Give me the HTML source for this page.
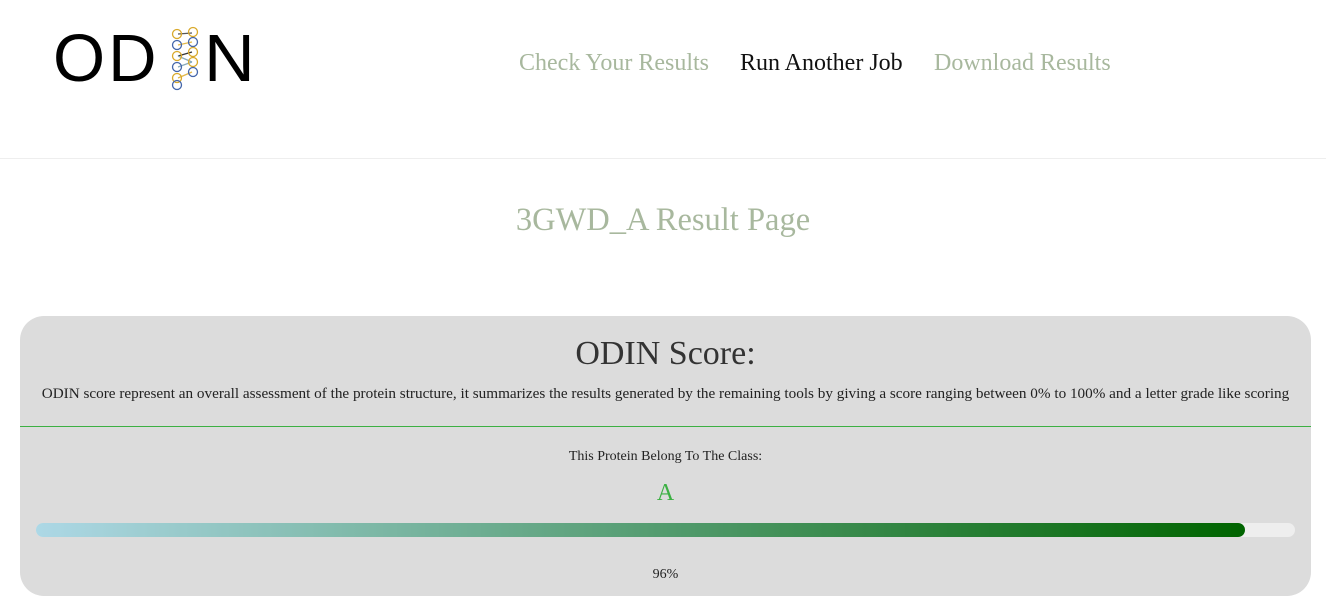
<!DOCTYPE html>
<html><head><meta charset="utf-8"><style>
body{margin:0;width:1326px;height:615px;background:#fff;font-family:"Liberation Serif",serif;overflow:hidden;position:relative}
.abs{position:absolute;white-space:nowrap}
.logo{font-family:"Liberation Sans",sans-serif;font-size:67px;color:#000;top:19px;line-height:80px}
.nav{top:48px;font-size:24px;line-height:30px}
.hr{position:absolute;left:0;top:158px;width:1326px;height:1px;background:#eee}
.card{position:absolute;left:20px;top:316px;width:1291px;height:280px;background:#dcdcdc;border-radius:24px;overflow:hidden}
</style></head><body>
<div class="abs logo" style="left:53px;letter-spacing:3px">OD</div>
<div class="abs logo" style="left:204px;transform:scaleX(1.05);transform-origin:left">N</div>
<svg class="abs" style="left:168px;top:26px" width="34" height="66" viewBox="0 0 34 66">
<g fill="none" stroke-width="1.3">
<line x1="10" y1="8" x2="24" y2="7" stroke="#555"/><line x1="10" y1="19" x2="24" y2="16" stroke="#e3b94a"/>
<line x1="10" y1="30" x2="24" y2="26" stroke="#333"/><line x1="10" y1="41" x2="24" y2="36" stroke="#8ab"/>
<line x1="10" y1="52" x2="24" y2="46" stroke="#e3b94a"/><line x1="10" y1="30" x2="24" y2="36" stroke="#8ab"/>
<circle cx="9" cy="8" r="4.5" stroke="#d9a92b"/><circle cx="9" cy="19" r="4.5" stroke="#4466aa"/>
<circle cx="9" cy="30" r="4.5" stroke="#d9a92b"/><circle cx="9" cy="41" r="4.5" stroke="#4466aa"/>
<circle cx="9" cy="52" r="4.5" stroke="#d9a92b"/><circle cx="9" cy="59" r="4.5" stroke="#4466aa"/>
<circle cx="25" cy="6" r="4.5" stroke="#d9a92b"/><circle cx="25" cy="16" r="4.5" stroke="#4466aa"/>
<circle cx="25" cy="26" r="4.5" stroke="#d9a92b"/><circle cx="25" cy="36" r="4.5" stroke="#d9a92b"/>
<circle cx="25" cy="46" r="4.5" stroke="#4466aa"/>
</g></svg>
<div class="abs nav" style="left:519px;color:#a8b89e">Check Your Results</div>
<div class="abs nav" style="left:740px;color:#111">Run Another Job</div>
<div class="abs nav" style="left:934px;color:#a8b89e">Download Results</div>
<div class="hr"></div>
<div class="abs" style="left:0;width:1326px;text-align:center;top:202px;font-size:32.5px;color:#a8b89e">3GWD_A Result Page</div>
<div class="card">
<div class="abs" style="left:0;width:1291px;text-align:center;top:19px;font-size:34px;color:#333">ODIN Score:</div>
<div class="abs" style="left:0;width:1291px;text-align:center;top:69px;font-size:15.2px;color:#222">ODIN score represent an overall assessment of the protein structure, it summarizes the results generated by the remaining tools by giving a score ranging between 0% to 100% and a letter grade like scoring</div>
<div style="position:absolute;left:0;top:110px;width:1291px;height:1px;background:#3cb043"></div>
<div class="abs" style="left:0;width:1291px;text-align:center;top:133px;font-size:14px;color:#222">This Protein Belong To The Class:</div>
<div class="abs" style="left:0;width:1291px;text-align:center;top:164px;font-size:24px;color:#3cb043">A</div>
<div style="position:absolute;left:16px;top:207px;width:1259px;height:14px;border-radius:7px;background:#eee">
<div style="width:1209px;height:14px;border-radius:7px;background:linear-gradient(90deg,#add8e6,#006400)"></div></div>
<div class="abs" style="left:0;width:1291px;text-align:center;top:251px;font-size:14px;color:#222">96%</div>
</div>
</body></html>
